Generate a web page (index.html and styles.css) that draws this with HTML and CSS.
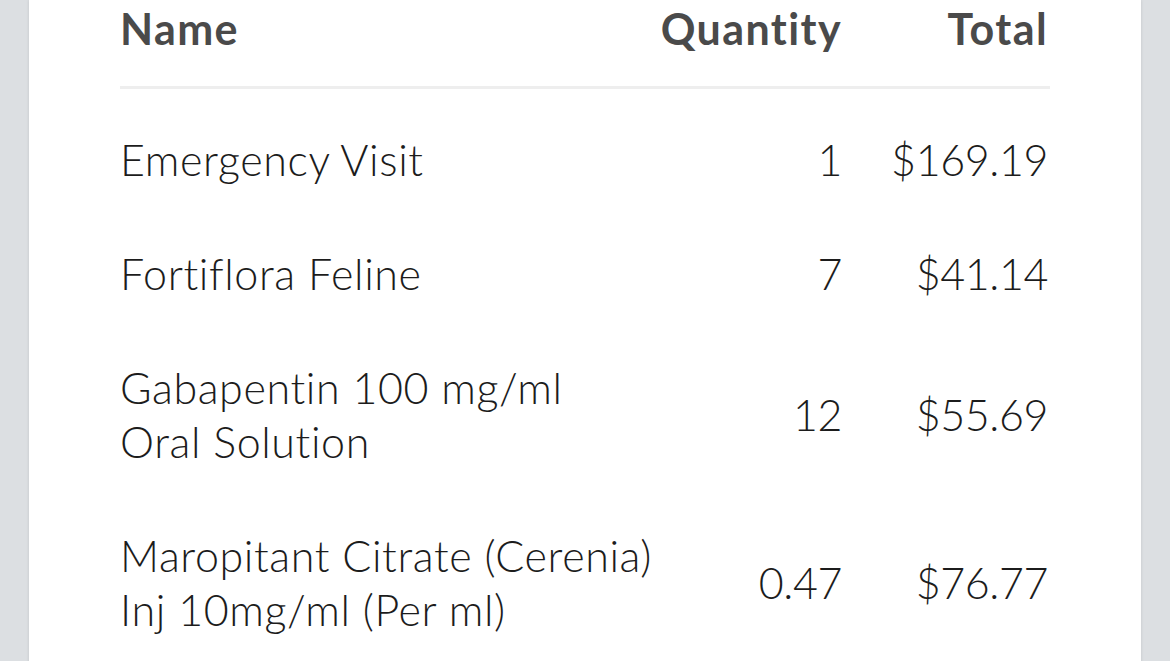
FILE: index.html
```html
<!DOCTYPE html>
<html>
<head>
  <title>Invoice Items</title>
  <link rel="stylesheet" href="styles.css">
</head>
<body>
  <div class="card">
    <table class="items">
      <colgroup>
        <col>
        <col class="col-qty">
        <col class="col-total">
      </colgroup>
      <thead>
        <tr>
          <th class="name">Name</th>
          <th class="num">Quantity</th>
          <th class="num total">Total</th>
        </tr>
      </thead>
      <tbody>
        <tr class="first">
          <td class="name">Emergency Visit</td>
          <td class="num">1</td>
          <td class="num total">$169.19</td>
        </tr>
        <tr>
          <td class="name">Fortiflora Feline</td>
          <td class="num">7</td>
          <td class="num total">$41.14</td>
        </tr>
        <tr>
          <td class="name">Gabapentin 100 mg/ml<br>Oral Solution</td>
          <td class="num">12</td>
          <td class="num total">$55.69</td>
        </tr>
        <tr>
          <td class="name">Maropitant Citrate (Cerenia)<br>Inj 10mg/ml (Per ml)</td>
          <td class="num">0.47</td>
          <td class="num total">$76.77</td>
        </tr>
      </tbody>
    </table>
  </div>
</body>
</html>
```

FILE: styles.css
```css
    html, body {
      margin: 0;
      height: 100%;
      overflow: hidden;
    }

    body {
      background-color: #dcdfe2;
      font-family: "Source Sans Pro", Lato, "Open Sans", sans-serif;
      font-variant-ligatures: none;
      color: #1c1c1c;
    }

    .card {
      margin: 0 29px;
      min-height: 100%;
      padding: 0 91px;
      background-color: #ffffff;
      box-shadow: 0 0 3px rgba(0, 0, 0, 0.12);
    }

    .items {
      width: 100%;
      border-collapse: collapse;
      font-size: 43px;
      line-height: 54px;
    }

    .col-qty {
      width: 190px;
    }

    .col-total {
      width: 208px;
    }

    th {
      padding: 2px 0 30px;
      font-weight: 700;
      letter-spacing: 1.4px;
      color: #4a4a4a;
      border-bottom: 3px solid #eeeeee;
    }

    td {
      padding: 30px 0;
      font-weight: 300;
      letter-spacing: 0.6px;
      vertical-align: middle;
    }

    td.num {
      letter-spacing: -0.4px;
    }

    .name {
      text-align: left;
    }

    .num {
      text-align: right;
    }

    .total {
      padding-right: 2px;
    }

    tr.first td {
      padding-top: 44px;
    }
```
